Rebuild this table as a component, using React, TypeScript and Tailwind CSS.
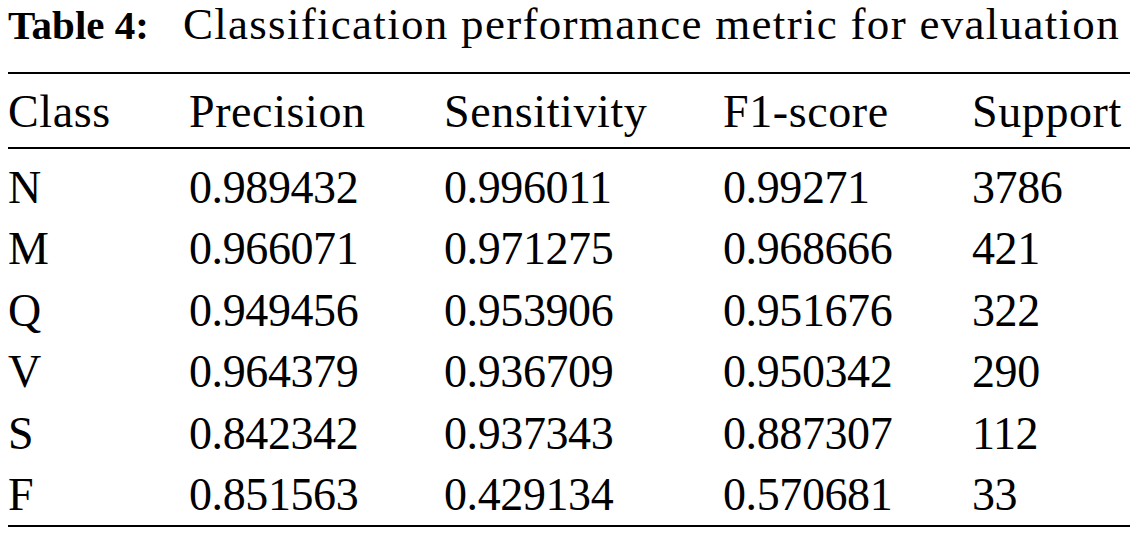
const headers = ['Class', 'Precision', 'Sensitivity', 'F1-score', 'Support'];

const rows = [
  ['N', '0.989432', '0.996011', '0.99271', '3786'],
  ['M', '0.966071', '0.971275', '0.968666', '421'],
  ['Q', '0.949456', '0.953906', '0.951676', '322'],
  ['V', '0.964379', '0.936709', '0.950342', '290'],
  ['S', '0.842342', '0.937343', '0.887307', '112'],
  ['F', '0.851563', '0.429134', '0.570681', '33'],
];

const cols = 'grid grid-cols-[181px_255px_279px_249px_1fr]';

const App = () => {
  return (
    <div className="w-[1133px] h-[533px] bg-white text-black font-['Liberation_Serif','Times_New_Roman',serif] overflow-hidden">
      <div className="pl-[8px] w-[1130px]">
        <div className="h-[48px] flex items-baseline whitespace-nowrap pt-[1px]">
          <span className="font-bold text-[41px] leading-[46px] mr-[34px]">Table 4:</span>
          <span className="text-[45px] leading-[46px] tracking-[1.3px]">Classification performance metric for evaluation</span>
        </div>

        <div className="mt-[24px] border-t-2 border-b-2 border-black">
          <div className={`${cols} h-[73px] pt-[2px] text-[46px] leading-[71px] tracking-[0.6px]`}>
            {headers.map((h) => (
              <div key={h} className="whitespace-nowrap">{h}</div>
            ))}
          </div>
        </div>

        <div className="pt-[8px] border-b-2 border-black">
          {rows.map((r) => (
            <div key={r[0]} className={`${cols} h-[61.4px] text-[46px] leading-[61.4px]`}>
              {r.map((c, i) => (
                <div key={i} className={i === 0 ? 'whitespace-nowrap' : 'whitespace-nowrap tracking-[-0.4px]'}>
                  {c}
                </div>
              ))}
            </div>
          ))}
        </div>
      </div>
    </div>
  );
};

export default App;
